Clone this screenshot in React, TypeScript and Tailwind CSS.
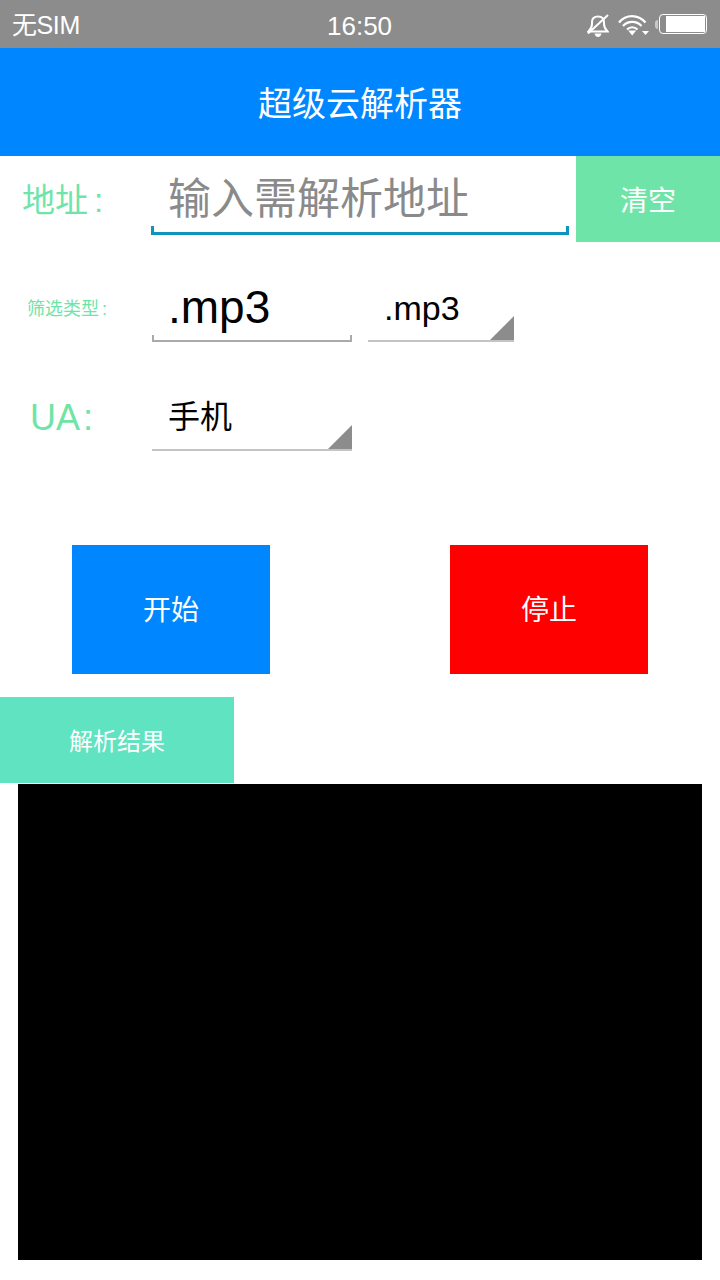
import React from 'react'

const font = "font-['Liberation_Sans','Noto_Sans_CJK_SC',sans-serif]"

const StatusIcons = () => (
  <div className="flex items-center">
    {/* muted bell */}
    <svg width="22" height="24" viewBox="0 0 22 24" className="mr-[9px] mt-[2px]" fill="none" stroke="#fff">
      <path d="M1.500 18.500H20.500C18.500 16.500 17 14.500 17 11V9C17 5.500 14.500 3.500 11 3.500C7.500 3.500 5 5.500 5 9V11C5 14.500 3.500 16.500 1.500 18.500Z" strokeWidth="2" />
      <path d="M21 2L1 20.500" strokeWidth="2" />
      <path d="M7.500 20.500H14.500C14 22.800 12.800 24 11 24C9.200 24 8 22.800 7.500 20.500Z" fill="#fff" stroke="none" />
    </svg>
    {/* wifi with small down arrow */}
    <svg width="31" height="24" viewBox="0 0 31 24" className="mr-[6px] mt-[2px]" fill="none" stroke="#fff" strokeWidth="2.200">
      <path d="M1 9.500C8 1 20 1 27.500 9.500" />
      <path d="M5 13C10 7.500 18.500 7.500 23.500 13" />
      <path d="M9 16.500C12 13.500 16.500 13.500 19.500 16.500" />
      <path d="M10.200 17.500H18.200L14.200 22.500Z" fill="#fff" stroke="none" />
      <path d="M24 18H31L27.500 22Z" fill="#fff" stroke="none" />
    </svg>
    {/* battery */}
    <div className="w-[3px] h-[9px] bg-[#c8c8c8] rounded-l-sm mr-[1px]" />
    <div className="w-[48px] h-[20px] border border-white rounded-[4px] flex justify-end p-[1px]">
      <div className="w-[39px] h-full bg-white" />
    </div>
  </div>
)

const Arrow = ({ size }: { size: number }) => (
  <svg width={size} height={size} viewBox="0 0 24 24" className="absolute right-0 bottom-0">
    <path d="M24 0V24H0z" fill="#8c8c8c" />
  </svg>
)

const App: React.FC = () => {
  return (
    <div className={`${font} w-[720px] h-[1280px] bg-white overflow-hidden`}>
      <div className="h-[48px] bg-[#8c8c8c] pl-[12px] pr-[13px] flex items-center justify-between text-white relative">
        <span className="text-[25px] pt-[3px] tracking-[-0.4px]">无SIM</span>
        <span className="text-[26px] absolute left-[327px] top-[9px] leading-[34px]">16:50</span>
        <StatusIcons />
      </div>
      <div className="h-[108px] bg-[#0086ff] flex items-center justify-center text-white text-[34px] pt-[4px]">
        超级云解析器
      </div>

      <div className="flex h-[86px]">
        <div className="w-[151px] pl-[22px] pt-[25px] text-[33px] leading-[40px] text-[#6fe4a8]">
          地址<span className="ml-[6px]">:</span>
        </div>
        <div className="w-[418px] h-[79px] relative pl-[17px] pt-[18px] border-b-[3px] border-[#0f94bd] text-[43px] leading-[50px] text-[#8a8a8a]">
          输入需解析地址
          <div className="absolute left-0 bottom-0 h-[6px] w-full border-x-[3px] border-[#0f94bd]" />
        </div>
        <div className="ml-[7px] w-[144px] h-[86px] bg-[#6fe4a8] flex items-center justify-center text-white text-[28px] pt-[5px]">
          清空
        </div>
      </div>

      <div className="flex mt-[33px] h-[67px]">
        <div className="w-[152px] pl-[27px] pt-[19px] text-[18px] leading-[30px] text-[#6fe4a8]">
          筛选类型<span className="ml-[3px]">:</span>
        </div>
        <div className="w-[200px] h-[67px] relative pl-[16px] pt-[7px] border-b-2 border-[#aaaaaa] text-[46px] leading-[50px] text-black">
          .mp3
          <div className="absolute left-0 bottom-0 h-[5px] w-full border-x-2 border-[#aaaaaa]" />
        </div>
        <div className="ml-[16px] w-[146px] h-[67px] relative pl-[16px] pt-[13px] border-b-2 border-[#c4c4c4] text-[34px] leading-[40px] text-black">
          .mp3
          <Arrow size={24} />
        </div>
      </div>

      <div className="flex mt-[42px] h-[67px]">
        <div className="w-[152px] pl-[30px] pt-[12px] text-[36px] leading-[44px] text-[#6fe4a8]">
          UA<span className="ml-[3px]">:</span>
        </div>
        <div className="w-[200px] h-[67px] relative pl-[16px] pt-[13px] border-b-2 border-[#c4c4c4] text-[32px] leading-[40px] text-black">
          手机
          <Arrow size={24} />
        </div>
      </div>

      <div className="flex mt-[94px] pl-[72px] gap-[180px]">
        <div className="w-[198px] h-[129px] bg-[#0086ff] flex items-center justify-center text-white text-[28px] pt-[3px]">开始</div>
        <div className="w-[198px] h-[129px] bg-[#ff0000] flex items-center justify-center text-white text-[28px] pt-[3px]">停止</div>
      </div>

      <div className="mt-[23px] w-[234px] h-[86px] bg-[#60e3c0] flex items-center justify-center text-white text-[24px] pt-[3px]">
        解析结果
      </div>
      <div className="mt-[1px] ml-[18px] w-[684px] h-[476px] bg-black" />
    </div>
  )
}

export default App
